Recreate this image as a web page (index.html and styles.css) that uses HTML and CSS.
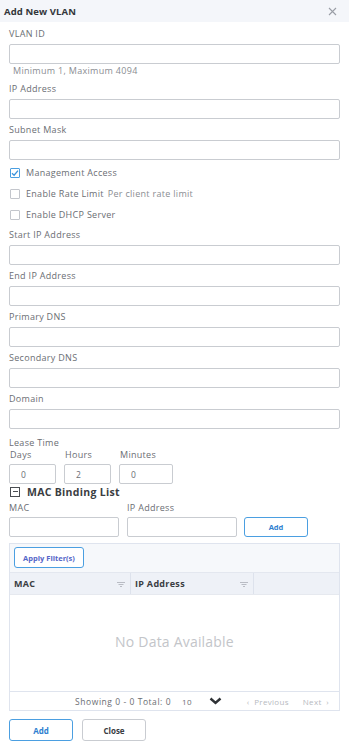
FILE: index.html
```
<!DOCTYPE html>
<html lang="en">
<head>
    <meta charset="UTF-8">
    <meta name="viewport" content="width=device-width, initial-scale=1.0">
    <title>Add New VLAN</title>
    <link rel="stylesheet" href="styles.css">
</head>
<body>
    <header class="modal-header">
        <span class="modal-title">Add New VLAN</span>
        <svg class="close-icon" width="9" height="9" viewBox="0 0 9 9">
            <path d="M1 1 L8 8 M8 1 L1 8" stroke="#9a9ea6" stroke-width="1.1" fill="none"/>
        </svg>
    </header>

    <div class="modal-body">
        <div class="field with-hint">
            <label>VLAN ID</label>
            <input type="text">
            <div class="hint">Minimum 1, Maximum 4094</div>
        </div>
        <div class="field">
            <label>IP Address</label>
            <input type="text">
        </div>
        <div class="field tight">
            <label>Subnet Mask</label>
            <input type="text">
        </div>

        <div class="checks">
            <div class="check-row">
                <span class="box checked">
                    <svg width="8" height="8" viewBox="0 0 8 8"><path d="M1 4.2 L3.1 6.2 L7 1.6" stroke="#3b93dd" stroke-width="1.3" fill="none"/></svg>
                </span>
                Management Access
            </div>
            <div class="check-row">
                <span class="box"></span>
                Enable Rate Limit <span class="sub">Per client rate limit</span>
            </div>
            <div class="check-row">
                <span class="box"></span>
                Enable DHCP Server
            </div>
        </div>

        <div class="field">
            <label>Start IP Address</label>
            <input type="text">
        </div>
        <div class="field">
            <label>End IP Address</label>
            <input type="text">
        </div>
        <div class="field">
            <label>Primary DNS</label>
            <input type="text">
        </div>
        <div class="field">
            <label>Secondary DNS</label>
            <input type="text">
        </div>
        <div class="field">
            <label>Domain</label>
            <input type="text">
        </div>

        <div class="lease">
            <label>Lease Time</label>
            <div class="lease-row">
                <div class="lease-col days">
                    <label>Days</label>
                    <input type="text" value="0">
                </div>
                <div class="lease-col hours">
                    <label>Hours</label>
                    <input type="text" value="2">
                </div>
                <div class="lease-col minutes">
                    <label>Minutes</label>
                    <input type="text" value="0">
                </div>
            </div>
        </div>

        <div class="section-title">
            <span class="minus-box"></span>
            MAC Binding List
        </div>

        <div class="binding-row">
            <div class="binding-col">
                <label>MAC</label>
                <input type="text">
            </div>
            <div class="binding-col">
                <label>IP Address</label>
                <input type="text">
            </div>
            <button class="btn btn-small">Add</button>
        </div>

        <div class="grid">
            <div class="grid-toolbar">
                <button class="btn btn-filter">Apply Filter(s)</button>
            </div>
            <div class="grid-head">
                <div class="grid-cell col-mac">
                    MAC
                    <svg class="funnel" width="8" height="5" viewBox="0 0 8 5"><path d="M0 0.5 H8 M1.5 2.5 H6.5 M3 4.5 H5" stroke="#b9bcc4" stroke-width="1"/></svg>
                </div>
                <div class="grid-cell col-ip">
                    IP Address
                    <svg class="funnel" width="8" height="5" viewBox="0 0 8 5"><path d="M0 0.5 H8 M1.5 2.5 H6.5 M3 4.5 H5" stroke="#b9bcc4" stroke-width="1"/></svg>
                </div>
                <div class="grid-cell col-rest"></div>
            </div>
            <div class="grid-empty">No Data Available</div>
            <div class="grid-footer">
                <span class="showing">Showing 0 - 0 Total: 0</span>
                <span class="page-size">10</span>
                <svg class="chevron" width="13" height="8" viewBox="0 0 13 8"><path d="M1.5 1.5 L6.5 6 L11.5 1.5" stroke="#2f3236" stroke-width="2.4" fill="none"/></svg>
                <span class="pager">&lsaquo;&nbsp; Previous</span>
                <span class="pager">Next &nbsp;&rsaquo;</span>
            </div>
        </div>

        <div class="actions">
            <button class="btn btn-primary">Add</button>
            <button class="btn btn-default">Close</button>
        </div>
    </div>
</body>
</html>
```

FILE: styles.css
```
* {
    margin: 0;
    padding: 0;
    box-sizing: border-box;
}

body {
    font-family: "Open Sans", Arial, sans-serif;
    font-size: 9px;
    letter-spacing: 0.3px;
    color: #6b6e73;
    background-color: #ffffff;
}

.modal-header {
    height: 22px;
    background-color: #f4f6fa;
    display: flex;
    align-items: center;
    justify-content: space-between;
    padding: 0 12px 0 4px;
}

.modal-title {
    font-size: 9.5px;
    font-weight: bold;
    letter-spacing: 0.1px;
    color: #33363b;
}

.modal-body {
    padding: 6px 9px 0 9px;
}

label {
    display: block;
    line-height: 12px;
    color: #6b6e73;
}

input {
    display: block;
    width: 100%;
    height: 20px;
    border: 1px solid #c9ccd1;
    border-radius: 2px;
    padding: 0 8px;
    font-family: inherit;
    font-size: 8.5px;
    color: #6b6e73;
    background-color: #fff;
}

.field {
    margin-bottom: 5px;
}

.field label {
    margin-bottom: 4px;
}

.field.with-hint {
    margin-bottom: 6px;
}

.field.tight {
    margin-bottom: 2px;
}

.hint {
    margin-top: 1px;
    padding-left: 4px;
    line-height: 12px;
    color: #8a8d92;
}

.checks {
    margin-bottom: 4px;
}

.check-row {
    height: 21px;
    display: flex;
    align-items: center;
    gap: 6px;
    padding-left: 1px;
}

.check-row .sub {
    color: #8a8d92;
    margin-left: -2px;
}

.box {
    width: 10px;
    height: 10px;
    border: 1px solid #c3c6cc;
    border-radius: 1px;
    display: flex;
    align-items: center;
    justify-content: center;
}

.box.checked {
    border-color: #4b9fe1;
}

.lease {
    margin-top: 8px;
}

.lease-row {
    display: flex;
    gap: 8px;
}

.lease-col label {
    margin: 0 0 3px 1px;
}

.lease-col input {
    height: 20px;
    padding-left: 11px;
}

.days, .hours {
    width: 47px;
}

.minutes {
    width: 54px;
}

.section-title {
    display: flex;
    align-items: center;
    gap: 7px;
    margin-top: 2px;
    height: 12px;
    padding-left: 1px;
    font-size: 10.5px;
    font-weight: bold;
    color: #3a3d42;
}

.minus-box {
    width: 10px;
    height: 10px;
    border: 1.5px solid #4a4d52;
    position: relative;
}

.minus-box::after {
    content: "";
    position: absolute;
    left: 1.5px;
    right: 1.5px;
    top: 2.75px;
    height: 1.5px;
    background-color: #4a4d52;
}

.binding-row {
    display: flex;
    align-items: flex-end;
    gap: 8px;
    margin-top: 4px;
}

.binding-col {
    width: 110px;
}

.binding-col label {
    margin-bottom: 3px;
}

.btn {
    font-family: inherit;
    background-color: #fff;
    border-radius: 3px;
    cursor: pointer;
}

.btn-small {
    width: 64px;
    height: 20px;
    border: 1.5px solid #4b9fe1;
    color: #2f7fd0;
    font-size: 7.5px;
    font-weight: bold;
    margin-left: -1px;
}

.grid {
    margin-top: 6px;
    border: 1px solid #dfe4ee;
}

.grid-toolbar {
    background-color: #f6f8fb;
    padding: 3px 4px 4px 4px;
}

.btn-filter {
    width: 70px;
    height: 21px;
    border: 1.5px solid #4b9fe1;
    color: #5566c8;
    font-size: 7.5px;
    font-weight: bold;
    letter-spacing: 0;
}

.grid-head {
    display: flex;
    height: 22px;
    background-color: #eef1f7;
    border-top: 1px solid #e3e7ef;
}

.grid-cell {
    position: relative;
    padding: 4px 4px;
    font-weight: bold;
    color: #3a3d42;
    border-right: 1px solid #dde2ec;
}

.col-mac {
    width: 121px;
}

.col-ip {
    width: 123px;
}

.col-rest {
    flex: 1;
    border-right: none;
}

.funnel {
    position: absolute;
    right: 5px;
    top: 9px;
}

.grid-empty {
    height: 97px;
    display: flex;
    align-items: center;
    justify-content: center;
    padding-bottom: 3px;
    font-size: 14px;
    letter-spacing: 0.2px;
    color: #c3c5c9;
    border-top: 1px solid #e6e9ef;
}

.grid-footer {
    height: 19px;
    border-top: 1px solid #dfe4ee;
    display: flex;
    align-items: center;
    justify-content: flex-end;
    padding-right: 10px;
    font-size: 8px;
    color: #6b6e73;
}

.showing {
    font-size: 8.5px;
    letter-spacing: 0.55px;
}

.page-size {
    margin-left: 11px;
}

.chevron {
    margin-left: 17px;
}

.pager {
    color: #b7bac0;
    margin-left: 25px;
}

.pager + .pager {
    margin-left: 14px;
}

.actions {
    display: flex;
    gap: 9px;
    margin-top: 8px;
}

.actions .btn {
    width: 64px;
    height: 22px;
    font-size: 8px;
    font-weight: bold;
}

.btn-primary {
    border: 1.5px solid #4b9fe1;
    color: #2f7fd0;
}

.btn-default {
    border: 1.5px solid #c9ccd1;
    color: #3a3d42;
}
```
